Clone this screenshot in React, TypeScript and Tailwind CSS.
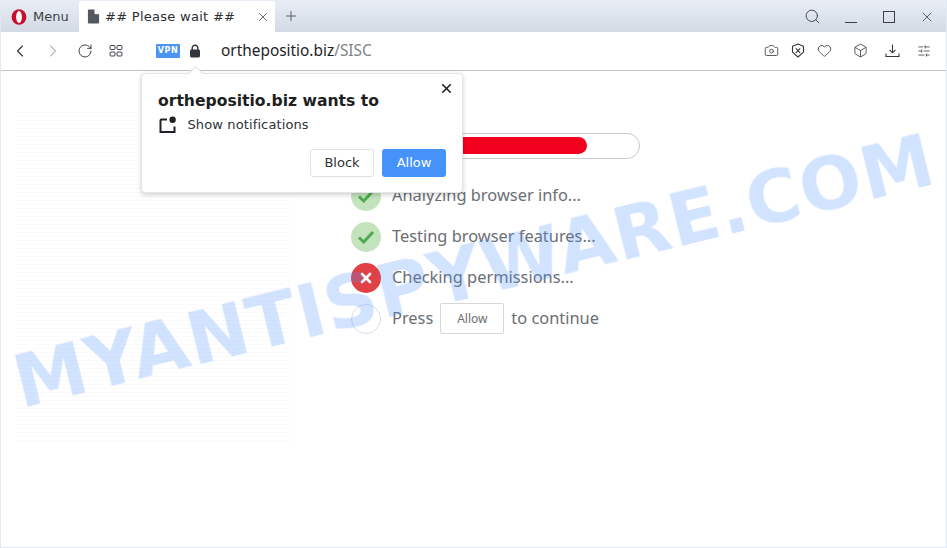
import React from "react";
import { ChevronLeft, ChevronRight, RotateCw, Search, Plus, X, Camera, Heart, Box, SlidersHorizontal } from "lucide-react";

const ui = "font-['DejaVu_Sans',sans-serif]";

function Opera() {
  return (
    <svg width="16" height="16" viewBox="0 0 16 16">
      <ellipse cx="8" cy="8" rx="7.4" ry="7.8" fill="#c8102e" />
      <ellipse cx="8" cy="8" rx="2.9" ry="6" fill="#fff" />
    </svg>
  );
}

function Tabbar() {
  return (
    <div className={`flex h-8 shrink-0 items-end bg-gradient-to-b from-[#e9eef6] to-[#d3dae5] ${ui}`}>
      <div className="flex h-[30px] w-[78px] items-center pl-[10px] pb-[1px] text-[13px] text-[#3c3f45]">
        <Opera />
        <span className="ml-[6px]">Menu</span>
      </div>
      <div className="flex h-[31px] w-[196px] items-center rounded-t-[2px] bg-white pl-[8px] text-[13px] text-[#2b2e33]">
        <svg width="13" height="15" viewBox="0 0 14 16" className="shrink-0">
          <path d="M1 1.5A1 1 0 0 1 2 .5h6l5 5v9a1 1 0 0 1-1 1H2a1 1 0 0 1-1-1z" fill="#55585e" />
          <path d="M8.5.5v4.6h4.6" fill="#fff" stroke="#fff" strokeWidth="0.8" />
        </svg>
        <span className="ml-[5px] whitespace-pre tracking-[0.28px]">## Please wait ##</span>
        <X size={14} strokeWidth={1.3} className="ml-[21px] shrink-0 text-[#3c3f45]" />
      </div>
      <Plus size={16} strokeWidth={1.2} className="mb-[8px] ml-[8px] text-[#3c4046]" />
      <div className="flex-1" />
      <div className="mb-[7px] flex items-center">
        <Search size={17} strokeWidth={1.3} className="mr-[24px] text-[#3c4046]" />
        <div className="mr-[26px] mt-[12px] h-[1px] w-[12px] bg-[#3c4046]" />
        <div className="mr-[24px] h-[12px] w-[12px] border border-[#3c4046]" />
        <X size={16} strokeWidth={1.2} className="mr-[11px] text-[#3c4046]" />
      </div>
    </div>
  );
}

function Toolbar() {
  return (
    <div className={`flex h-[39px] shrink-0 items-center border-b border-[#bfc3c7] bg-white pb-[1px] text-[#33363b] ${ui}`}>
      <ChevronLeft size={20} strokeWidth={1.4} className="ml-[9px]" />
      <ChevronRight size={20} strokeWidth={1.4} className="ml-[13px] text-[#b9bcc0]" />
      <RotateCw size={16} strokeWidth={1.4} className="ml-[14px]" />
      <svg width="14" height="12" viewBox="0 0 14 12" className="ml-[16px]" fill="none" stroke="#3c4046" strokeWidth="1">
        <rect x="1" y="0.5" width="5" height="4" rx="1" />
        <rect x="8" y="0.5" width="5" height="4" rx="1" />
        <rect x="1" y="7" width="5" height="4" rx="1" />
        <rect x="8" y="7" width="5" height="4" rx="1" />
      </svg>
      <div className="ml-[33px] flex h-[14px] w-[24px] items-center justify-center rounded-[1px] bg-[#4c95f0] text-[8px] font-bold tracking-[0.6px] text-white">VPN</div>
      <svg width="12" height="14" viewBox="0 0 12 14" className="ml-[9px]">
        <path d="M3.2 6V4a2.8 2.8 0 0 1 5.6 0v2" fill="none" stroke="#33363b" strokeWidth="1.4" />
        <rect x="1" y="5.5" width="10" height="8" rx="1.4" fill="#33363b" />
      </svg>
      <div className="ml-[20px] font-['Noto_Sans',sans-serif] text-[15.4px] text-[#1f2226]">
        orthepositio.biz<span className="text-[#7c8288]">/SISC</span>
      </div>
      <div className="flex-1" />
      <Camera size={15} strokeWidth={1.3} />
      <svg width="14" height="15" viewBox="0 0 14 15" fill="none" stroke="#33363b" strokeWidth="1.1" className="ml-[12px]">
        <path d="M7 1l5.5 2.2v6L7 14 1.5 9.2v-6z" strokeLinejoin="round" />
        <path d="M4.8 5.4l4.4 4.4M9.2 5.4L4.8 9.8" />
      </svg>
      <Heart size={15} strokeWidth={1.3} className="ml-[12px]" />
      <Box size={15} strokeWidth={1.3} className="ml-[21px]" />
      <svg width="15" height="15" viewBox="0 0 15 15" fill="none" stroke="#33363b" strokeWidth="1.1" className="ml-[17px]">
        <path d="M7.5 1.5v8M4.5 6.8l3 3 3-3M1 10.5v3h13v-3" />
      </svg>
      <SlidersHorizontal size={14} strokeWidth={1.3} className="ml-[17px] mr-[15px]" />
    </div>
  );
}

function Popup() {
  return (
    <div className={`absolute left-[140px] top-[73px] h-[120px] w-[322px] rounded-[4px] border border-[#e4e5e7] bg-white shadow-[0_2px_5px_rgba(0,0,0,0.18)] ${ui}`}>
      <div className="absolute -top-[6px] left-[48px] h-[11px] w-[11px] rotate-45 border-l border-t border-[#dfe0e2] bg-white" />
      <X size={15} strokeWidth={2.6} className="absolute right-[8px] top-[7px] text-[#1d1f22]" />
      <div className="relative pl-[16px] pt-[17px]">
        <div className="text-[15.6px] font-bold leading-5 text-[#1d1f22]">orthepositio.biz wants to</div>
        <div className="mt-[4px] flex items-center">
          <svg width="18" height="18" viewBox="0 0 18 18" fill="none" className="ml-[0.5px]">
            <path d="M8 3.5H2.5a1 1 0 0 0-1 1V16h14v-5.5" stroke="#1f2226" strokeWidth="2" />
            <circle cx="13.6" cy="3.8" r="3.2" fill="#1f2226" />
          </svg>
          <span className="ml-[11px] text-[13px] tracking-[0.12px] text-[#2e3136]">Show notifications</span>
        </div>
        <div className="mr-[16px] mt-[14px] flex justify-end gap-2">
          <div className="flex h-[28px] w-[64px] items-center justify-center rounded-[3px] border border-[#dfe1e4] text-[13px] text-[#2e3136]">Block</div>
          <div className="flex h-[28px] w-[64px] items-center justify-center rounded-[3px] bg-[#4593f8] text-[13px] text-white">Allow</div>
        </div>
      </div>
    </div>
  );
}

function Check() {
  return (
    <div className="flex h-[30px] w-[30px] shrink-0 items-center justify-center rounded-full bg-[#c3e3bd]">
      <svg width="18" height="14" viewBox="0 0 18 14" fill="none">
        <path d="M2 7.5l4.7 4.5L16 2" stroke="#4fa94f" strokeWidth="3" />
      </svg>
    </div>
  );
}

function Row({ icon, children }: { icon: React.ReactNode; children: React.ReactNode }) {
  return (
    <div className="flex h-[41px] items-center">
      {icon}
      <div className="ml-[11px] flex items-center text-[16.4px] text-[#6b6e73]">{children}</div>
    </div>
  );
}

export default function App() {
  return (
    <div className="relative flex h-[548px] w-[947px] flex-col overflow-hidden border-x border-b border-[#e3e9f2] bg-white">
      <Tabbar />
      <Toolbar />
      <div className="relative flex-1 pl-[350px] pt-[62px] font-['Noto_Sans',sans-serif]">
        <div className="absolute left-[15px] top-[40px] h-[330px] w-[275px] bg-[repeating-linear-gradient(0deg,#fbfbfc_0,#fbfbfc_1px,transparent_1px,transparent_4px)]" />
        <div className="relative h-[26px] w-[289px] rounded-full border border-[#c8c9cb] pb-[4px] pl-[5px] pt-[3px]">
          <div className="h-full w-[230px] rounded-full bg-[#f4001f]" />
        </div>
        <div className="relative mt-[16px] flex flex-col">
          <Row icon={<Check />}>Analyzing browser info...</Row>
          <Row icon={<Check />}>Testing browser features...</Row>
          <Row icon={
            <div className="flex h-[30px] w-[30px] shrink-0 items-center justify-center rounded-full bg-[#e14045]">
              <X size={16} strokeWidth={4} className="text-white" />
            </div>
          }>Checking permissions...</Row>
          <Row icon={<div className="h-[30px] w-[30px] shrink-0 rounded-full border border-[#d5deea]" />}>
            Press
            <div className="mx-[7px] flex h-[31px] w-[64px] items-center justify-center rounded-[2px] border border-[#d6d7d9] text-[12px]">Allow</div>
            to continue
          </Row>
        </div>
      </div>
      <Popup />
      <div className="pointer-events-none absolute left-[473px] top-[271px] -translate-x-1/2 -translate-y-1/2 rotate-[-13.8deg] whitespace-nowrap font-['DejaVu_Sans',sans-serif] text-[73px] font-bold tracking-[1px] text-[#4d94ff] opacity-25 blur-[0.6px]">
        MYANTISPYWARE.COM
      </div>
    </div>
  );
}
